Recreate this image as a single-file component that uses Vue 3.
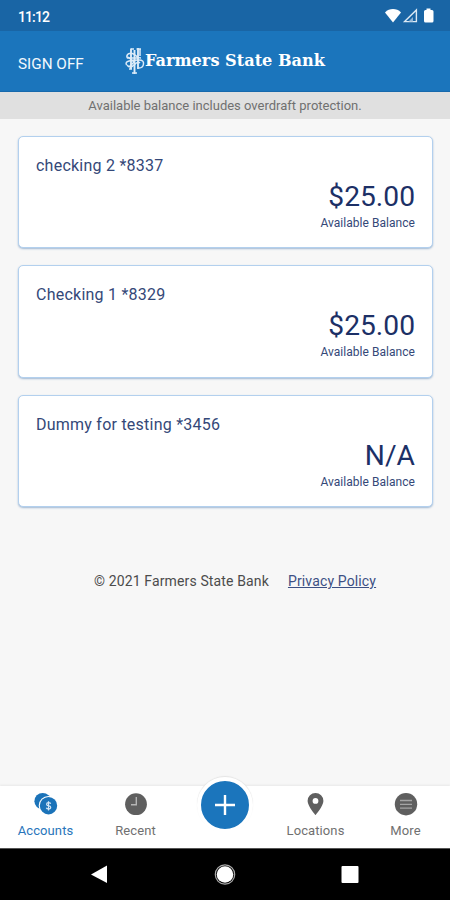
<script setup>
const accounts = [
  { name: 'checking 2 *8337', balance: '$25.00' },
  { name: 'Checking 1 *8329', balance: '$25.00' },
  { name: 'Dummy for testing *3456', balance: 'N/A' },
];
</script>

<template>
  <div class="screen">
    <div class="status-bar">
      <span class="time">11:12</span>
      <svg class="status-icons" width="50" height="16" viewBox="0 0 50 16">
        <path d="M0 4.4C4.5 0 11.5 0 16 4.4L8 14.5z" fill="#fff" />
        <path d="M19.6 13.6L31.4 2V13.6z" fill="none" stroke="#dce9f4" stroke-width="1.4" />
        <path d="M23.5 13.5L28 9V13.5z" fill="#8fb4d6" />
        <path d="M41.5 .5h4v1.500h1.500q1.500 0 1.500 1.500v9.500q0 1.500-1.500 1.500h-6.500q-1.500 0-1.500-1.500v-9.500q0-1.500 1.500-1.500h1z" fill="#fff" />
      </svg>
    </div>

    <header class="header">
      <button class="sign-off">SIGN OFF</button>
      <svg class="logo" width="210" height="32" viewBox="0 0 210 32">
        <g fill="none" stroke="#dcebf8" stroke-width="1.5">
          <path d="M7 3.5V24M10.5 5V29M14 3V24" stroke-width="1.9" />
          <path d="M7 4H10M12.5 4H17M16 4V11M4 9Q2 11 3.5 13H14M4 9Q8 7 11 10T17 13" />
          <path d="M2.5 20Q1 17 5 16T15 15Q20 15 19.5 19T15 23M3 20Q6 24 10 20T16 18M5 24H8M8 28H13M4 12L10 17L5 22" />
        </g>
        <text x="21" y="21" textLength="180" lengthAdjust="spacingAndGlyphs">Farmers State Bank</text>
      </svg>
    </header>

    <div class="notice">Available balance includes overdraft protection.</div>

    <main class="content">
      <section v-for="account in accounts" :key="account.name" class="card">
        <div class="name">{{ account.name }}</div>
        <div class="balance">{{ account.balance }}</div>
        <div class="caption">Available Balance</div>
      </section>
      <footer class="footer">
        <span>© 2021 Farmers State Bank</span>
        <a class="privacy">Privacy Policy</a>
      </footer>
    </main>

    <nav class="tabs">
      <div class="tab active">
        <svg width="26" height="24" viewBox="0 0 26 24">
          <circle cx="10.7" cy="9.2" r="8.3" fill="#1b73b9" />
          <circle cx="16.5" cy="13.7" r="9.8" fill="#fff" />
          <circle cx="16.5" cy="13.7" r="8.7" fill="#1b73b9" />
          <path d="M18.7 11.700Q18.200 10.700 16.500 10.700Q14.600 10.700 14.600 12.200T16.600 13.800T18.700 15.400T16.600 17Q14.700 17 14.300 15.800M16.500 9.200V18.400" fill="none" stroke="#d5e7f6" stroke-width="1.2" />
        </svg>
        <span>Accounts</span>
      </div>
      <div class="tab">
        <svg width="24" height="24" viewBox="0 0 24 24">
          <circle cx="13" cy="12.2" r="10.9" fill="#5f5f5f" />
          <path d="M13.3 5V12.7H8" fill="none" stroke="#b5b5b5" stroke-width="1.4" />
        </svg>
        <span>Recent</span>
      </div>
      <div class="tab">
        <button class="add" aria-label="Add">
          <svg width="20" height="20" viewBox="0 0 20 20">
            <path d="M10 0V20M0 10H20" stroke="#fff" stroke-width="2.4" />
          </svg>
        </button>
      </div>
      <div class="tab">
        <svg width="24" height="24" viewBox="0 0 24 24">
          <path d="M12.500 1A7.900 7.900 0 0 0 4.600 8.900C4.600 14 12.500 23 12.500 23S20.400 14 20.400 8.900A7.900 7.900 0 0 0 12.500 1zM12.500 6a2.900 2.900 0 1 1 0 5.800a2.900 2.900 0 0 1 0-5.800z" fill="#5f5f5f" />
        </svg>
        <span>Locations</span>
      </div>
      <div class="tab">
        <svg width="26" height="24" viewBox="0 0 26 24">
          <circle cx="14" cy="12.2" r="11.2" fill="#5f5f5f" />
          <path d="M8 8.500H20M8 12.300H20M8 16.100H20" stroke="#a5a5a5" stroke-width="1.3" />
        </svg>
        <span>More</span>
      </div>
    </nav>

    <div class="system-nav">
      <svg width="18" height="20" viewBox="0 0 18 20"><path d="M1 9.500L17 .5V18z" fill="#fff" /></svg>
      <svg width="22" height="22" viewBox="0 0 22 22">
        <circle cx="11" cy="10.5" r="9.7" fill="none" stroke="#aaa" stroke-width="1.2" />
        <circle cx="11" cy="10.5" r="8.3" fill="#fff" />
      </svg>
      <svg width="18" height="18" viewBox="0 0 18 18"><rect x=".5" y="0" width="17" height="17" rx="1" fill="#fff" /></svg>
    </div>
  </div>
</template>

<style>
body {
  margin: 0;
}
</style>

<style scoped>
.screen {
  display: flex;
  flex-direction: column;
  width: 450px;
  height: 900px;
  background: #f7f7f7;
  font-family: Roboto, sans-serif;
}
button {
  padding: 0;
  border: 0;
  background: none;
  font: inherit;
}
.status-bar {
  display: flex;
  justify-content: space-between;
  height: 31px;
  padding: 0 15px 0 18px;
  box-sizing: border-box;
  background: #1965a5;
  color: #fff;
}
.time {
  font-size: 14px;
  font-weight: 500;
  letter-spacing: -0.9px;
  line-height: 34px;
}
.status-icons {
  margin-top: 8px;
}
.header {
  display: flex;
  height: 61px;
  padding-left: 18px;
  box-sizing: border-box;
  background: #1b75bc;
  border-bottom: 1px solid #1769ac;
  color: #fff;
}
.sign-off {
  width: 106px;
  color: #f2f8fd;
  font-size: 15.3px;
  line-height: 66px;
  text-align: left;
}
.logo {
  margin-top: 14px;
}
.logo text {
  fill: #fff;
  font-family: "DejaVu Serif", serif;
  font-size: 16.5px;
  font-weight: bold;
}
.notice {
  height: 27px;
  background: #e0e0e0;
  color: #707070;
  font-size: 13px;
  line-height: 28px;
  text-align: center;
}
.content {
  display: flex;
  flex: 1;
  flex-direction: column;
  gap: 17px;
  padding: 17px 17px 0 18px;
}
.card {
  height: 112.4px;
  padding: 18px 17px 0;
  box-sizing: border-box;
  border: 1px solid #b3d0ee;
  border-radius: 5px;
  background: #fff;
  box-shadow: 0 1px 2px #9fb8d3;
  color: #344878;
}
.name {
  font-size: 16px;
  letter-spacing: 0.24px;
  line-height: 22px;
}
.balance {
  margin-top: 3px;
  color: #1c3066;
  font-size: 28.2px;
  line-height: 34px;
  text-align: right;
}
.caption {
  font-size: 12px;
  letter-spacing: 0.04px;
  line-height: 18px;
  text-align: right;
}
.footer {
  display: flex;
  justify-content: center;
  gap: 19px;
  padding: 47px 0 0 19px;
  color: #4c4c4c;
  font-size: 14px;
  letter-spacing: 0.14px;
  line-height: 20px;
}
.privacy {
  color: #3d5084;
  text-decoration: underline;
}
.tabs {
  display: grid;
  grid-template-columns: repeat(5, 1fr);
  height: 62px;
  background: #fff;
  box-shadow: 0 -1px 2px #e8e8e8;
}
.tab {
  display: flex;
  flex-direction: column;
  align-items: center;
  padding-top: 6px;
  color: #707070;
  font-size: 13px;
  letter-spacing: 0.1px;
}
.tab span {
  line-height: 16px;
  margin: 7px 0 0 1px;
}
.active {
  color: #2875ba;
}
.add {
  display: flex;
  align-items: center;
  justify-content: center;
  width: 56px;
  height: 56px;
  margin-top: -15px;
  box-sizing: border-box;
  border: 4px solid #fff;
  border-radius: 50%;
  background: #1b75bc;
  box-shadow: 0 -1px 1px #e4e4e4;
}
.system-nav {
  display: flex;
  align-items: center;
  justify-content: space-between;
  height: 52px;
  padding: 0 91px 0 90px;
  box-sizing: border-box;
  border-top: 1px solid #555;
  background: #000;
}
</style>
